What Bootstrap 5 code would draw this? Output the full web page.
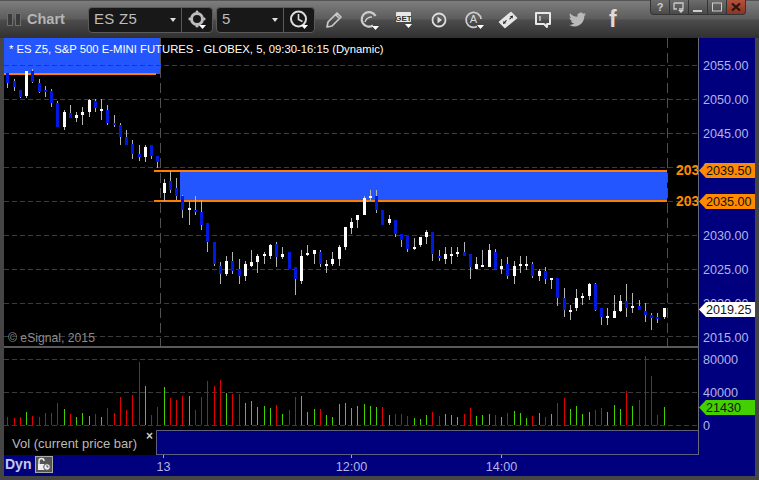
<!DOCTYPE html>
<html lang="en">
<head>
<meta charset="utf-8">
<title>Chart</title>
<link rel="stylesheet" href="https://cdn.jsdelivr.net/npm/bootstrap@5.3.0/dist/css/bootstrap.min.css">
<style>
html,body{margin:0;height:100%;background:#3c3c3c;overflow:hidden}
body{font-family:"Liberation Sans",Arial,sans-serif}
.win{width:759px;height:480px;background:#454545;padding:0 4px 4px;position:relative}
.tbar{height:38px;margin:0 -4px;flex:none;background:linear-gradient(#7d7d7d 0,#5c5c5c 18px,#4c4c4c 19px,#2f2f2f 38px);border-top:1px solid #555}
.pane-mark{width:6px;height:13px;border:1px solid #6d6d6d;margin-right:2px;background:#3a3a3a}
.pane-first{margin-left:7px}
.tname{font-weight:700;font-size:14.5px;color:#b5b5b5;margin-left:4px;width:61px}
.combo{height:26px;background:#181818;border:1px solid #5a5a5a;border-radius:4px;color:#bdbdbd;font-size:15px}
.combo-a{width:125px}.combo-b{width:99px;margin-left:3px}
.combo-txt{padding-left:5px;flex-grow:1;letter-spacing:.3px}
.combo-caret{width:0;height:0;border-left:3.5px solid transparent;border-right:3.5px solid transparent;border-top:4px solid #ddd;margin-right:5px}
.combo-ico{width:31px;height:100%;border-left:1px solid #5a5a5a}
.tools{margin-left:2px}
.tool{width:34.8px;height:30px;color:#ddd}
.fglyph{font-weight:700;font-size:23px;line-height:1;color:#dcdcdc}
.wbtns{position:absolute;top:0;left:650px;height:15px}
.wbtn{width:20px;height:15px;padding:0;border:1px solid #333;border-top:0;background:linear-gradient(#6c6c6c,#4a4a4a);color:#ccc;font-size:11px;font-weight:700;line-height:13px;border-radius:0}
.wbtn:first-child{border-bottom-left-radius:4px}
.wbtn:last-child{border-bottom-right-radius:4px;background:linear-gradient(#b4513a,#8a3525);color:#222}
.body-navy{background:#00007f;height:438px}
.upper{height:417px}
.plotcol{width:694px;flex:none}
.plotcol svg{display:block;background:#000}
.sep{height:2px;background:#595959;flex:none}
.legend-row{height:25px;flex:none;background:#000}
.legend-lab{width:152px;color:#b9b9b9;font-size:13px;padding-left:8px;position:relative;line-height:27px}
.legend-x{position:absolute;right:3px;top:-1px;color:#ccc;font-size:12px;line-height:14px;font-weight:700}
.legend-strip{flex-grow:1;background:#00007f;border-top:1px solid #5f5f7f;border-left:1px solid #5f5f7f;border-bottom:1px solid #5f5f7f}
.axis{width:57px;flex:none;border-left:1px solid #6a6a7c;position:relative;font-size:12.6px;color:#b4b4e6}
.axlab{position:absolute;left:4px;line-height:14px;height:14px}
.tag{position:absolute;left:0;width:56px;height:15px;color:#111;line-height:16px;font-size:12.6px;padding-left:7px;clip-path:polygon(0 50%,7px 0,100% 0,100% 100%,7px 100%)}
.tag-or{background:#ff8a00}.tag-wh{background:#fff}.tag-gr{background:#44d000}
.timeax{height:21px;position:relative;color:#b4b4e6;font-size:12.6px}
.dyn{position:absolute;left:1px;top:0;font-weight:700;font-size:14px;color:#c8c8e8;line-height:18px}
.lockico{position:absolute;left:31px;top:1px;width:18px;height:17px;background:#555;border:1px solid #aaa}
.tlab{position:absolute;top:4px;transform:translateX(-50%);line-height:16px}
.ttick{position:absolute;top:0;width:1px;height:3px;background:#a0a0c0}
.zlab{font:700 14px "Liberation Sans",sans-serif;fill:#ff8a00}
.esig{font:12.2px "Liberation Sans",sans-serif;fill:#8c8c8c}
.ttl{font:11.3px "Liberation Sans",sans-serif;fill:#fff}
</style>
</head>
<body>
<div class="win d-flex flex-column">
  <div class="tbar d-flex align-items-center">
    <span class="pane-mark pane-first"></span><span class="pane-mark"></span>
    <span class="tname">Chart</span>
    <div class="combo combo-a d-flex align-items-center">
      <span class="combo-txt">ES Z5</span><span class="combo-caret"></span>
      <span class="combo-ico d-flex align-items-center justify-content-center">
        <svg width="22" height="22" viewBox="0 0 22 22"><circle cx="11" cy="10" r="5.500" fill="none" stroke="#bdbdbd" stroke-width="3"/><circle cx="11" cy="2.800" r="1.400" fill="#bdbdbd"/><circle cx="3.800" cy="10" r="1.400" fill="#bdbdbd"/><circle cx="18.200" cy="10" r="1.400" fill="#bdbdbd"/><circle cx="11" cy="17.200" r="1.400" fill="#bdbdbd"/><path d="M13 16h7l-3.500 4z" fill="#fff"/></svg>
      </span>
    </div>
    <div class="combo combo-b d-flex align-items-center">
      <span class="combo-txt">5</span><span class="combo-caret"></span>
      <span class="combo-ico d-flex align-items-center justify-content-center">
        <svg width="22" height="22" viewBox="0 0 22 22"><circle cx="10.500" cy="10" r="7.500" fill="none" stroke="#ddd" stroke-width="2"/><path d="M10.500 5v5.500l4 2" fill="none" stroke="#ddd" stroke-width="1.600"/><path d="M13 16h7l-3.500 4z" fill="#fff"/></svg>
      </span>
    </div>
    <div class="tools d-flex align-items-center">
      <span class="tool d-flex align-items-center justify-content-center"><svg width="18" height="18" viewBox="0 0 18 18"><path d="M2 16l1-5L12 2l4 4-9 9zM10.500 3.500l4 4" fill="none" stroke="#c9c9c9" stroke-width="1.700" stroke-linejoin="round"/></svg></span>
      <span class="tool d-flex align-items-center justify-content-center"><svg width="22" height="22" viewBox="0 0 22 22"><path d="M17.500 7A7.300 7.300 0 1 0 15 16.500" fill="none" stroke="#ccc" stroke-width="2.200"/><path d="M7 13c1-3 4-5 7-5" fill="none" stroke="#ccc" stroke-width="1.500"/><path d="M14 17h7l-3.500 4z" fill="#fff"/></svg></span>
      <span class="tool d-flex align-items-center justify-content-center"><svg width="22" height="22" viewBox="0 0 22 22"><rect x="3" y="3" width="15" height="10" rx="1" fill="#e8e8e8"/><text x="10.500" y="11.500" text-anchor="middle" font-family="Liberation Sans" font-weight="700" font-size="8" fill="#333">GET</text><path d="M12 15h7l-3.500 4z" fill="#fff"/></svg></span>
      <span class="tool d-flex align-items-center justify-content-center"><svg width="18" height="18" viewBox="0 0 18 18"><circle cx="9" cy="9" r="6.500" fill="none" stroke="#ddd" stroke-width="1.800"/><path d="M7.500 5.500l4.500 3.500-4.500 3.500z" fill="#ddd"/></svg></span>
      <span class="tool d-flex align-items-center justify-content-center"><svg width="22" height="22" viewBox="0 0 22 22"><path d="M14 17.500A7.500 7.500 0 1 1 18 10" fill="none" stroke="#ccc" stroke-width="1.800"/><text x="10.500" y="14" text-anchor="middle" font-family="Liberation Sans" font-size="11" fill="#ddd">A</text><path d="M14 16h7l-3.500 4z" fill="#fff"/></svg></span>
      <span class="tool d-flex align-items-center justify-content-center"><svg width="20" height="20" viewBox="0 0 20 20"><path d="M1.500 12L13 2.500l5.500 5.500L7 17.500z" fill="#e6e6e6" stroke="#e6e6e6" stroke-linejoin="round" stroke-width="1.500"/><path d="M11 9l2-2-1.500-.5 3.500-1-.5 3.500-.5-1.500-2 2zM9 10.500l-2 2 1.500.5-3.500 1 .5-3.500.5 1.500 2-2z" fill="#222"/></svg></span>
      <span class="tool d-flex align-items-center justify-content-center"><svg width="18" height="18" viewBox="0 0 18 18"><path d="M2 2h14v11h-3v3l-3-3H2z" fill="none" stroke="#e8e8e8" stroke-width="2" stroke-linejoin="round"/><path d="M6 5v5" stroke="#e8e8e8" stroke-width="1.200"/></svg></span>
      <span class="tool d-flex align-items-center justify-content-center"><svg width="17" height="17" viewBox="0 0 24 24"><path fill="#b9b9b9" d="M23.953 4.570a10 10 0 01-2.825.775 4.958 4.958 0 002.163-2.723c-.951.555-2.005.959-3.127 1.184a4.920 4.920 0 00-8.384 4.482C7.690 8.095 4.067 6.130 1.640 3.162a4.822 4.822 0 00-.666 2.475c0 1.710.870 3.213 2.188 4.096a4.904 4.904 0 01-2.228-.616v.060a4.923 4.923 0 003.946 4.827 4.996 4.996 0 01-2.212.085 4.936 4.936 0 004.604 3.417 9.867 9.867 0 01-6.102 2.105c-.390 0-.779-.023-1.170-.067a13.995 13.995 0 007.557 2.209c9.053 0 13.998-7.496 13.998-13.985 0-.210 0-.420-.015-.630A9.935 9.935 0 0024 4.590z"/></svg></span>
      <span class="tool d-flex align-items-center justify-content-center"><span class="fglyph">f</span></span>
    </div>
  </div>
  <div class="btn-group wbtns" role="group">
    <button class="btn wbtn">?</button>
    <button class="btn wbtn"><svg width="12" height="11" viewBox="0 0 12 11" class="d-block mx-auto"><path d="M1 1h9v6H6" fill="none" stroke="#ccc" stroke-width="1.300"/><path d="M1 1v6h3" fill="none" stroke="#ccc" stroke-width="1.300"/><path d="M5 8h6l-3 3z" fill="#ccc"/></svg></button>
    <button class="btn wbtn"><svg width="12" height="11" viewBox="0 0 12 11" class="d-block mx-auto"><path d="M1 9h9" stroke="#ccc" stroke-width="2"/></svg></button>
    <button class="btn wbtn"><svg width="12" height="11" viewBox="0 0 12 11" class="d-block mx-auto"><rect x="1.500" y="1" width="9" height="8" fill="none" stroke="#ccc"/></svg></button>
    <button class="btn wbtn"><svg width="12" height="11" viewBox="0 0 12 11" class="d-block mx-auto"><path d="M2 1.500l8 7M10 1.500l-8 7" stroke="#2a1410" stroke-width="2.200"/></svg></button>
  </div>
  <div class="body-navy d-flex flex-column">
    <div class="upper d-flex">
      <div class="plotcol d-flex flex-column">
        <svg id="price" width="694" height="308" viewBox="4 38 694 308" shape-rendering="crispEdges"></svg>
        <div class="sep"></div>
        <svg id="vol" width="694" height="82" viewBox="4 348 694 82" shape-rendering="crispEdges"></svg>
        <div class="legend-row d-flex">
          <div class="legend-lab">Vol (current price bar)<span class="legend-x">×</span></div>
          <div class="legend-strip"></div>
        </div>
      </div>
      <div class="axis" id="axis"></div>
    </div>
    <div class="timeax">
      <span class="dyn">Dyn</span>
      <span class="lockico"><svg width="16" height="15" viewBox="0 0 16 15" class="d-block"><path d="M3 7V4a2.500 2.500 0 0 1 5 0" fill="none" stroke="#eee" stroke-width="1.500"/><rect x="2" y="7" width="7" height="6" fill="#eee"/><circle cx="11" cy="10" r="3.300" fill="#eee" stroke="#555"/><path d="M11 8v2h1.500" stroke="#333" fill="none" stroke-width=".8"/></svg></span>
      <span class="ttick" style="left:159px"></span><span class="tlab" style="left:159.500px">13</span>
      <span class="ttick" style="left:347px"></span><span class="tlab" style="left:347.500px">12:00</span>
      <span class="ttick" style="left:497px"></span><span class="tlab" style="left:497.500px">14:00</span>
    </div>
  </div>
</div>
<script>
var NS='http://www.w3.org/2000/svg';
function el(p,n,a,t){var e=document.createElementNS(NS,n);for(var k in a)e.setAttribute(k,a[k]);if(t)e.textContent=t;p.appendChild(e);return e}
function X(i){return Math.round(7.3+6.25*i)}
var p=document.getElementById('price'),v=document.getElementById('vol');
function R(s,x,y,w,h,f){el(s,'rect',{x:x,y:y,width:w,height:h,fill:f})}
R(p,4,38,157,36,'#2456ff');R(p,4,73,152,2,'#ff7d00');
[65,99,133,167,201,235,269,303,336].forEach(function(y){el(p,'line',{x1:4,x2:698,y1:y+.5,y2:y+.5,stroke:'#3c3c3c','stroke-dasharray':'5 3'})});
[160,667].forEach(function(x){el(p,'line',{x1:x+.5,x2:x+.5,y1:38,y2:346,stroke:'#505050','stroke-dasharray':'10 5'})});
R(p,180,172,487,28,'#2456ff');R(p,154,170,513,2,'#ff7d00');R(p,154,200,513,2,'#ff7d00');
var C=[['b',73,88,73,83],['b',79,91,81,87],['b',90,98,90,97],['w',71,98,71,96],['b',69,83,71,82],['b',79,93,83,92],['b',86,97,90,92],['b',89,107,91,103],['b',101,127,103,127],['w',110,130,112,127],
['b',105,118,113,118],['w',112,122,115,118],['w',107,125,112,115],['w',99,117,100,112],['b',99,112,101,108],['w',99,120,109,111],['b',105,125,110,123],['b',115,127,123,125],['b',123,145,125,137],['b',130,145,137,145],
['b',140,159,144,154],['b',145,161,154,157],['w',145,162,147,157],['b',145,159,145,156],['b',156,168,156,162],['w',179,201,183,193],['b',171,193,181,190],['b',178,200,188,196],['b',195,218,196,210],['w',201,225,208,210],
['b',196,215,210,212],['b',200,230,212,225],['b',223,252,223,242],['b',242,266,242,264],['b',262,284,266,274],['w',256,276,261,274],['b',252,274,261,271],['b',259,284,269,276],['w',261,281,264,276],['w',250,267,262,266],
['w',254,273,256,262],['w',252,264,254,256],['w',244,259,245,256],['b',242,267,244,257],['w',247,259,254,257],['b',252,269,252,269],['b',267,295,267,279],['w',250,284,256,281],['w',245,256,253,255],['w',250,264,250,254],
['b',250,267,252,264],['w',260,273,264,266],['w',252,266,259,264],['w',245,266,247,259],['w',227,250,227,247],['w',218,234,222,228],['w',215,228,215,220],['w',196,215,198,215],['w',190,201,196,198],['b',190,213,196,210],
['b',210,225,210,225],['w',215,225,219,223],['b',220,237,220,234],['b',234,247,234,240],['b',235,252,235,249],['w',238,250,247,249],['w',237,247,237,245],['w',230,244,232,237],['b',232,261,232,254],['b',250,261,256,258],
['w',247,264,254,259],['w',247,264,254,256],['w',247,257,252,254],['b',242,256,252,256],['b',254,279,254,267],['w',257,269,264,269],['w',250,267,265,267],['w',244,267,250,267],['b',249,269,252,269],['w',259,274,266,269],
['b',257,279,264,276],['w',261,284,266,276],['w',256,273,264,266],['w',256,270,264,266],['b',262,278,264,276],['w',269,281,271,276],['b',267,284,271,279],['w',278,289,278,280],['b',278,306,278,298],['b',288,317,298,310],
['w',305,320,310,312],['w',289,311,298,308],['w',293,305,296,298],['w',283,300,284,296],['b',283,311,284,310],['b',308,325,308,317],['w',308,325,316,318],['w',295,318,311,318],['w',295,312,301,311],['b',284,317,301,308],
['w',293,313,306,308],['b',300,310,306,310],['b',303,322,311,315],['b',313,330,315,318],['b',313,323,317,319],['w',308,319,308,317]];
C.forEach(function(c,i){var x=X(i);
 R(p,x,c[1],1,c[2]-c[1],'#b4b4b4');
 R(p,x-1,c[3],3,c[4]-c[3],c[0]=='b'?'#0018e0':'#fff');});
el(p,'text',{x:9,y:53,class:'ttl','shape-rendering':'auto'},'* ES Z5, S&P 500 E-MINI FUTURES - GLOBEX, 5, 09:30-16:15 (Dynamic)');
el(p,'text',{x:8,y:342,class:'esig'},'© eSignal, 2015');
el(p,'text',{x:676,y:175,class:'zlab'},'203');
el(p,'text',{x:676,y:206,class:'zlab'},'203');
[359,392,425].forEach(function(y){el(v,'line',{x1:4,x2:698,y1:y+.5,y2:y+.5,stroke:'#3c3c3c','stroke-dasharray':'5 3'})});
var VT='r202 r205 r202 g186 r198 r201 r189 r189 r159 g177 r192 g201 g189 g198 r192 g201 r174 r189 r141 r180 r135 r36 g108 r195 r171 g111 r144 r150 r138 g138 r180 r141 r93 r108 r90 g129 r132 r132 g159 g153 g171 g168 g174 r165 g192 r180 r141 g138 g186 g177 r177 g195 g201 g162 g159 g174 g168 g162 g168 g171 r171 g195 r192 r192 r198 g204 g207 g195 r186 r198 g192 g195 g201 r192 r174 g198 g195 g192 r195 g201 r189 g183 g189 g204 r198 g189 r201 g192 r159 r144 g177 g168 g192 g186 r180 r174 g186 g165 g177 r123 g168 r150 r18 r78 r195 g171'.split(' ');
VT.forEach(function(s,i){var top=350+Math.round(+s.slice(1)/3);
 R(v,X(i),top,1,425-top,s[0]=='r'?'#e00000':'#44d000');});
var ax=document.getElementById('axis');
function lab(t,y){var d=document.createElement('span');d.className='axlab';d.style.top=(y-38-6)+'px';d.textContent=t;ax.appendChild(d)}
function tag(t,y,c){var d=document.createElement('span');d.className='tag '+c;d.style.top=(y-38)+'px';d.textContent=t;ax.appendChild(d)}
[['2055.00',65],['2050.00',99],['2045.00',133],['2040.00',167],['2030.00',235],['2025.00',269],['2020.00',303],['2015.00',337],['80000',359],['40000',392],['0',425]].forEach(function(a){lab(a[0],a[1])});
tag('2039.50',163,'tag-or');tag('2035.00',194,'tag-or');tag('2019.25',302,'tag-wh');tag('21430',400,'tag-gr');
</script>
<script src="https://cdn.jsdelivr.net/npm/bootstrap@5.3.0/dist/js/bootstrap.bundle.min.js"></script>
</body>
</html>
